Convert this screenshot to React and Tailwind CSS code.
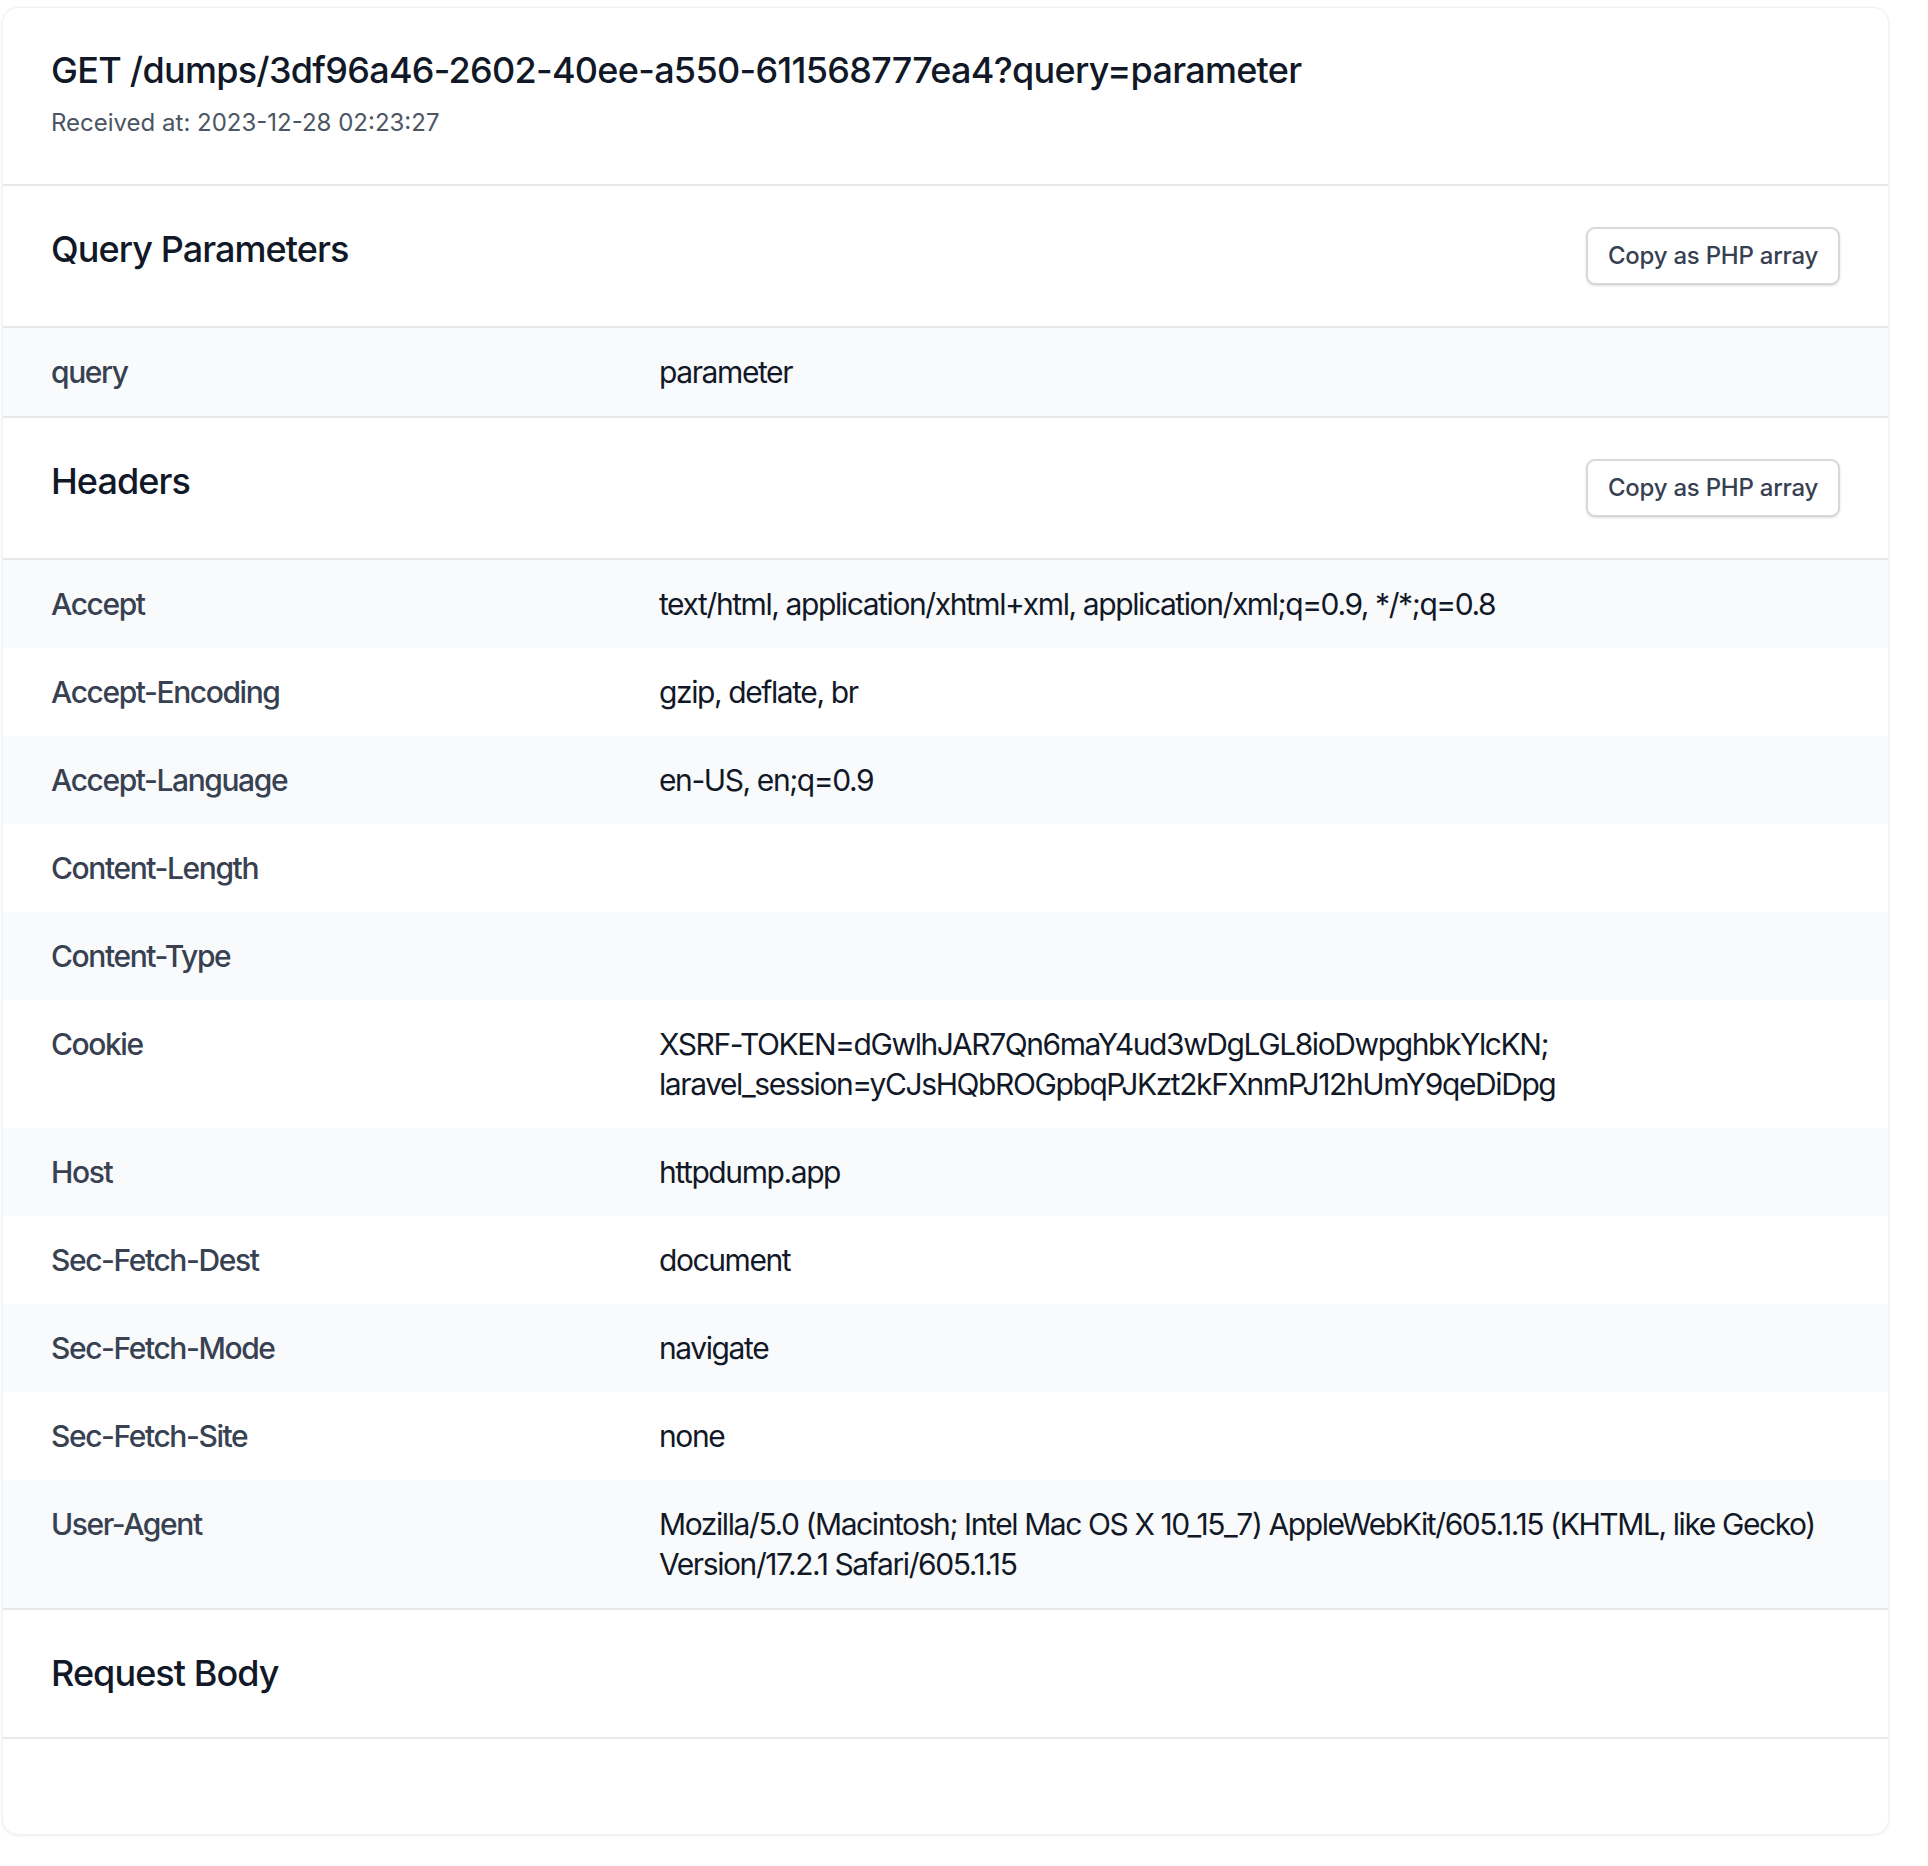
import React from 'react';

const queryParams = [{ key: 'query', value: 'parameter' }];

const headers = [
  { key: 'Accept', value: 'text/html, application/xhtml+xml, application/xml;q=0.9, */*;q=0.8' },
  { key: 'Accept-Encoding', value: 'gzip, deflate, br' },
  { key: 'Accept-Language', value: 'en-US, en;q=0.9' },
  { key: 'Content-Length', value: '' },
  { key: 'Content-Type', value: '' },
  {
    key: 'Cookie',
    value: 'XSRF-TOKEN=dGwlhJAR7Qn6maY4ud3wDgLGL8ioDwpghbkYlcKN; laravel_session=yCJsHQbROGpbqPJKzt2kFXnmPJ12hUmY9qeDiDpg',
  },
  { key: 'Host', value: 'httpdump.app' },
  { key: 'Sec-Fetch-Dest', value: 'document' },
  { key: 'Sec-Fetch-Mode', value: 'navigate' },
  { key: 'Sec-Fetch-Site', value: 'none' },
  {
    key: 'User-Agent',
    value: 'Mozilla/5.0 (Macintosh; Intel Mac OS X 10_15_7) AppleWebKit/605.1.15 (KHTML, like Gecko) Version/17.2.1 Safari/605.1.15',
  },
];

const SectionHeader = ({ title, copyable }) => (
  <div className="flex items-start justify-between px-12 py-[41px] border-b-2 border-[#e7e8eb]">
    <h2 className="text-[36px] leading-[45px] font-medium tracking-[-0.026em] text-[#111827]">{title}</h2>
    {copyable && (
      <button className="h-[58px] px-[20px] rounded-[9px] border-2 border-[#d5d8dd] bg-white text-[24px] font-medium tracking-[-0.01em] text-[#374151] shadow-sm">
        Copy as PHP array
      </button>
    )}
  </div>
);

const Row = ({ item, striped }) => (
  <div
    className={`flex pl-12 pr-[36px] py-6 text-[30px] leading-[40px] tracking-[-0.047em] ${
      striped ? 'bg-[#f9fafb]' : 'bg-white'
    }`}
  >
    <div className="w-[608px] shrink-0 font-medium text-[#374151]">{item.key}</div>
    <div className="flex-1 text-[#111827] break-words">{item.value}</div>
  </div>
);

const App = () => {
  return (
    <div className="min-h-[1866px] bg-white pt-2 pl-[3px]" style={{ fontFamily: 'Inter, "Noto Sans", sans-serif' }}>
      <div className="w-[1885px] bg-white rounded-[15px] shadow-[0_1px_4px_rgba(0,0,0,0.1)] ring-1 ring-[#f0f1f3] overflow-hidden">
        <div className="px-12 pt-10 pb-[43px] border-b-2 border-[#e7e8eb]">
          <h1 className="text-[36px] leading-[45px] font-medium tracking-[-0.02em] text-[#111827]">
            GET /dumps/3df96a46-2602-40ee-a550-611568777ea4?query=parameter
          </h1>
          <p className="mt-[12px] text-[24px] leading-[36px] text-[#4b5563]">Received at: 2023-12-28 02:23:27</p>
        </div>

        <SectionHeader title="Query Parameters" copyable />
        <div className="border-b-2 border-[#e7e8eb]">
          {queryParams.map((item) => (
            <Row key={item.key} item={item} striped />
          ))}
        </div>

        <SectionHeader title="Headers" copyable />
        <div className="border-b-2 border-[#e7e8eb]">
          {headers.map((item, i) => (
            <Row key={item.key} item={item} striped={i % 2 === 0} />
          ))}
        </div>

        <SectionHeader title="Request Body" />
        <div className="h-[95px]" />
      </div>
    </div>
  );
};

export default App;
